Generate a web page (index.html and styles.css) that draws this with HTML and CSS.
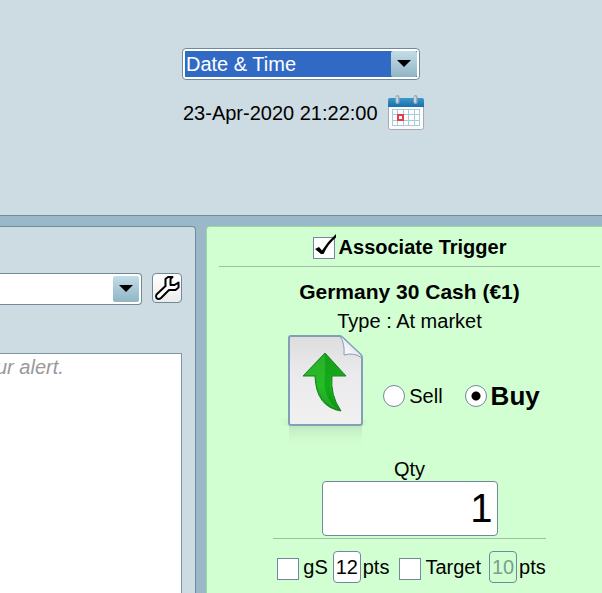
FILE: index.html
```html
<!DOCTYPE html>
<html lang="en">
<head>
<meta charset="utf-8">
<title>Alert</title>
<link rel="stylesheet" href="styles.css">
</head>
<body>
<header class="schedule">
  <div class="schedule-fields">
    <span class="combo combo-active">
      <select class="combo-select" aria-label="Condition"><option>Date &amp; Time</option></select>
      <span class="combo-arrow"><svg width="14" height="8" viewBox="0 0 14 8"><path d="M0 0h14L7 7z"/></svg></span>
    </span>
    <div class="date-row">
      <time datetime="2020-04-23T21:22:00">23-Apr-2020 21:22:00</time>
      <button class="icon-button" type="button" aria-label="Pick a date">
        <svg width="38" height="36" viewBox="0 0 38 36">
          <defs><linearGradient id="cal" x1="0" y1="0" x2="0" y2="1"><stop offset="0" stop-color="#3999cc"/><stop offset="1" stop-color="#1c6ea8"/></linearGradient></defs>
          <path d="M1.500 11h35v21.500q0 2-2 2h-31q-2 0-2-2z" fill="#fbfcfc" stroke="#aaa9b1"/>
          <path d="M1 12V5q0-2 2-2h32q2 0 2 2v7z" fill="url(#cal)"/>
          <rect x="5" y="14" width="28" height="17" fill="#a9cbd5"/>
          <g fill="#fff"><path d="M6 15h4v4H6zm5 0h5v4h-5zm6 0h4v4h-4zm5 0h5v4h-5zm6 0h4v4h-4zM6 20h4v5H6zm11 0h4v5h-4zm5 0h5v5h-5zm6 0h4v5h-4zM6 26h4v4H6zm5 0h5v4h-5zm6 0h4v4h-4zm5 0h5v4h-5zm6 0h4v4h-4z"/></g>
          <rect x="11" y="20" width="5" height="5" fill="#fff" stroke="#e83b45" stroke-width="2"/>
          <path d="M10.500 2v5M28.500 2v5" stroke="#9aaab8" stroke-width="4" stroke-linecap="round"/>
          <path d="M10 2v5M28 2v5" stroke="#d5dee4" stroke-width="1.500" stroke-linecap="round"/>
        </svg>
      </button>
    </div>
  </div>
</header>
<main class="workspace">
  <section class="message-panel">
    <div class="sound-row">
      <span class="combo combo-cut">
        <select class="combo-select" aria-label="Alert type"><option></option></select>
        <span class="combo-arrow"><svg width="14" height="8" viewBox="0 0 14 8"><path d="M0 0h14L7 7z"/></svg></span>
      </span>
      <button class="tool-button" type="button" aria-label="Settings">
        <svg width="28" height="28" viewBox="0 0 28 28"><path d="M19.500 3H15L12.500 5V12L3.500 20.500Q2.500 22 3.500 24Q5.500 26 8 24L16 16H22.500L25.500 13.500V8.500L21.500 11H17.500V5z" fill="#fff" stroke="#000" stroke-width="2" stroke-linejoin="round"/></svg>
      </button>
    </div>
    <textarea class="message" aria-label="Message" placeholder="ur alert."></textarea>
  </section>
  <section class="trigger-panel">
    <label class="trigger-toggle">
      <span class="check-wrap">
        <input class="check" type="checkbox" checked>
        <svg class="tick" width="24" height="26" viewBox="0 0 24 26"><path d="M2 16L6 14L9 17.500Q15 8 23 1V4.500Q15 11 10.500 21H8z"/></svg>
      </span>
      <span>Associate Trigger</span>
    </label>
    <hr class="rule">
    <h2 class="instrument">Germany 30 Cash (€1)</h2>
    <p class="order-type">Type : At market</p>
    <div class="side-row">
      <svg class="order-icon" width="90" height="116" viewBox="0 0 90 116">
        <defs>
          <linearGradient id="paper" x1="0" y1="0" x2="0" y2="1"><stop offset="0" stop-color="#ddd"/><stop offset=".4" stop-color="#eaeaec"/><stop offset="1" stop-color="#f1f1f2"/></linearGradient>
          <linearGradient id="fold" x1="0" y1="1" x2="1" y2="0"><stop offset="0" stop-color="#fff"/><stop offset=".45" stop-color="#eef0f4"/><stop offset="1" stop-color="#a9b3c0"/></linearGradient>
          <linearGradient id="reflection" x1="0" y1="0" x2="0" y2="1"><stop offset="0" stop-color="#c0e8c1"/><stop offset="1" stop-color="#d2ffd2" stop-opacity="0"/></linearGradient>
          <linearGradient id="ground" x1="0" y1="0" x2="1" y2="0"><stop offset="0" stop-color="#bfe8bf" stop-opacity="0"/><stop offset=".15" stop-color="#bfe8bf"/><stop offset=".85" stop-color="#bfe8bf"/><stop offset="1" stop-color="#bfe8bf" stop-opacity="0"/></linearGradient>
          <linearGradient id="green" x1="0" y1="0" x2="0" y2="1"><stop offset="0" stop-color="#20a520"/><stop offset=".55" stop-color="#18b91c"/><stop offset="1" stop-color="#0b9514"/></linearGradient>
        </defs>
        <path d="M0 84h90v7H0z" fill="url(#ground)" opacity=".6"/>
        <path d="M10 91h73v23H10z" fill="url(#reflection)"/>
        <path d="M12 1h48q2 0 3 1l19 18q1 1 1 3v65q0 2-2 2H12q-2 0-2-2V3q0-2 2-2z" fill="url(#paper)" stroke="#829fb8" stroke-width="2"/>
        <path d="M61 1Q66 8 65 20Q75 17 83 23L82 20L63 2z" fill="url(#fold)" stroke="#829fb8"/>
        <path d="M46 18L67 41H53Q51 60 62 76Q37 72 36 41H24z" fill="url(#green)" stroke="#16831b" stroke-linejoin="round"/>
        <path d="M46 19V43Q44 62 59 74Q39 69 37 40H26z" fill="#4dc346" opacity=".3"/>
        <path d="M46 19L65 40H52Q48 61 60 75Q43 64 46 40z" fill="#078f13" opacity=".3"/>
      </svg>
      <label class="side sell"><input class="radio" type="radio" name="side"><span>Sell</span></label>
      <label class="side buy"><input class="radio" type="radio" name="side" checked><span class="side-selected">Buy</span></label>
    </div>
    <label class="quantity-label" for="qty">Qty</label>
    <input class="quantity" id="qty" type="text" value="1">
    <div class="limits">
      <label class="limit-name"><input class="check" type="checkbox"><span>gS</span></label>
      <label class="points"><input class="points-input" type="text" value="12" aria-label="gS points"><span>pts</span></label>
      <label class="limit-name target"><input class="check" type="checkbox"><span>Target</span></label>
      <label class="points"><input class="points-input" type="text" value="10" aria-label="Target points" disabled><span>pts</span></label>
    </div>
  </section>
</main>
</body>
</html>
```
FILE: styles.css
```css
* { box-sizing: border-box; }

body {
  margin: 0;
  min-height: 100vh;
  display: flex;
  flex-direction: column;
  overflow: hidden;
  background: #9bb8c8;
  color: #000;
  font: 20px/24px "Liberation Sans", Arial, sans-serif;
}

input, select, textarea, button {
  margin: 0;
  font: inherit;
  color: inherit;
}

.schedule {
  display: flex;
  justify-content: center;
  height: 216px;
  padding-top: 48px;
  background: #cddce2;
  border-bottom: 1px solid #6f8c9b;
}

.schedule-fields { width: 238px; }

.combo {
  position: relative;
  display: flex;
  height: 32px;
  padding: 2px;
  background: #fff;
  border: 1px solid #71899a;
  border-radius: 4px;
}

.combo-select {
  appearance: none;
  flex: 1;
  min-width: 0;
  padding: 0 28px 0 1px;
  border: 0;
  border-radius: 0;
  background: #fff;
}

.combo-active .combo-select {
  background: #316ac5;
  color: #fff;
}

.combo-arrow {
  position: absolute;
  top: 2px;
  right: 2px;
  bottom: 2px;
  width: 26px;
  display: flex;
  align-items: center;
  justify-content: center;
  background: linear-gradient(#c2dde7, #91b5c4);
  border-radius: 2px;
  pointer-events: none;
}

.date-row {
  display: flex;
  align-items: center;
  gap: 9px;
  padding: 15px 0 0 1px;
  white-space: nowrap;
}

.icon-button {
  display: flex;
  padding: 0;
  border: 0;
  background: none;
}

.workspace {
  flex: 1;
  display: grid;
  grid-template-columns: 196px minmax(0, 1fr);
  gap: 10px;
  padding-top: 10px;
}

.message-panel {
  display: flex;
  flex-direction: column;
  padding: 46px 13px 0 0;
  background: #cddce2;
  border: solid #6f8c9b;
  border-width: 1px 1px 0 0;
  border-radius: 0 4px 0 0;
}

.sound-row {
  display: flex;
  align-items: flex-start;
  gap: 10px;
}

.combo-cut {
  flex: 1;
  border-left: 0;
  border-radius: 0 4px 4px 0;
}

.tool-button {
  display: flex;
  width: 30px;
  height: 30px;
  padding: 0;
  background: linear-gradient(#fff, #ececec);
  border: 1px solid #71899a;
  border-radius: 4px;
}

.message {
  flex: 1;
  margin-top: 48px;
  padding: 1px 0;
  border: solid #7d95a2;
  border-width: 1px 1px 0 0;
  background: #fff;
  text-indent: -4px;
  resize: none;
}

.message::placeholder {
  color: #999;
  font-style: italic;
}

.trigger-panel {
  display: flex;
  flex-direction: column;
  align-items: center;
  padding: 0 2px 0 12px;
  background: #d2ffd2;
  border: solid #9bd8a4;
  border-width: 1px 0 0 1px;
  border-radius: 4px 0 0 0;
}

.trigger-toggle {
  display: flex;
  align-items: center;
  gap: 4px;
  height: 39px;
  font-weight: bold;
}

.check-wrap {
  position: relative;
  display: flex;
  padding-top: 2px;
}

.tick {
  position: absolute;
  left: 0;
  bottom: 0;
  pointer-events: none;
}

.check, .radio {
  appearance: none;
  flex: none;
  width: 22px;
  height: 22px;
  background: #fff;
  border: 1px solid #71899a;
}

.radio { border-radius: 50%; }

.radio:checked { background: radial-gradient(circle, #000 4px, #fff 5px); }

.rule {
  width: 100%;
  margin: 0;
  border: 0;
  border-top: 1px solid #a0bda6;
}

.instrument {
  margin: 10px 0 0;
  font: inherit;
  font-size: 21px;
  font-weight: bold;
  line-height: 30px;
}

.order-type {
  margin: 0;
  line-height: 28px;
}

.side-row {
  display: flex;
  align-items: center;
  height: 122px;
}

.order-icon { align-self: flex-start; }

.side {
  display: flex;
  align-items: center;
  gap: 4px;
}

.sell { margin: 0 22px 0 14px; }

.side-selected {
  font-size: 26px;
  font-weight: bold;
}

.quantity {
  width: 176px;
  height: 55px;
  padding: 0 4px;
  border: 1px solid #71899a;
  border-radius: 4px;
  background: #fff;
  font-size: 40px;
  text-align: right;
}

.limits {
  display: flex;
  align-items: center;
  margin-top: 2px;
  padding: 12px 0 10px 4px;
  border-top: 1px solid #a0bda6;
}

.limit-name {
  display: flex;
  align-items: center;
  gap: 4px;
  margin-right: 5px;
}

.target { margin: 0 8px 0 10px; }

.limit-name .check { margin-top: 4px; }

.points {
  display: flex;
  align-items: center;
  gap: 2px;
}

.points-input {
  width: 28px;
  height: 32px;
  padding: 0;
  border: 1px solid #71899a;
  border-radius: 4px;
  background: #fff;
  text-align: center;
}

.points-input:disabled {
  background: transparent;
  color: #78a08c;
}
```
